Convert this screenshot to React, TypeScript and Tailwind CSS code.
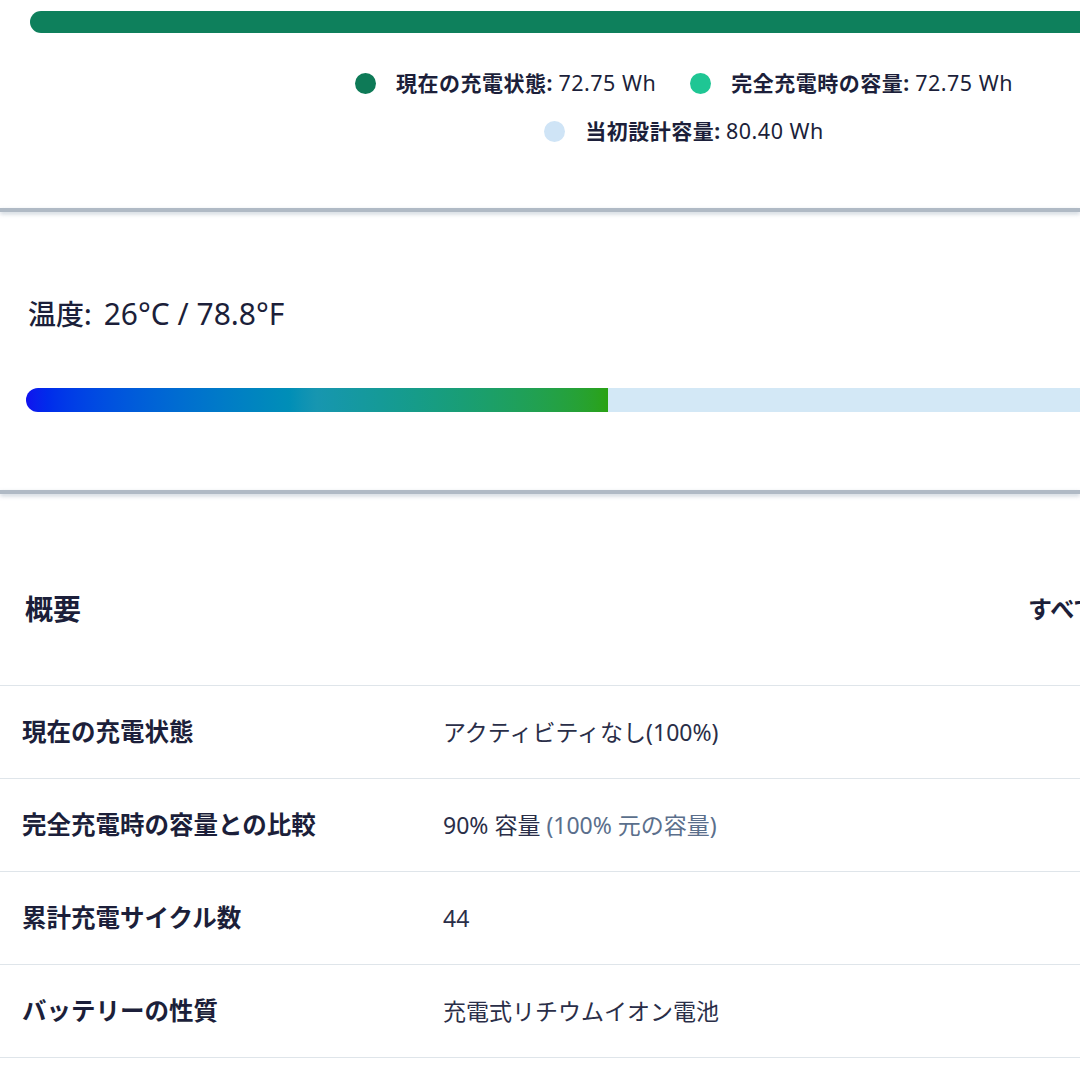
import React from "react";

const font = { fontFamily: '"Noto Sans", "Noto Sans CJK JP", sans-serif' };

function LegendItem({ color, label, value }: { color: string; label: string; value: string }) {
  return (
    <div className="flex items-center gap-[20px]">
      <span className={`block h-[21px] w-[21px] rounded-full ${color}`} />
      <span className="whitespace-nowrap text-[21px] leading-none text-[#1c1f3a]">
        <span className="font-bold tracking-[0.5px]">{label}:</span>{" "}
        <span className="text-[21.5px] tracking-[0.5px]">{value}</span>
      </span>
    </div>
  );
}

function Row({ label, children }: { label: string; children: React.ReactNode }) {
  return (
    <div className="flex h-[93px] items-center border-b border-[#dfe5ea]">
      <div className="w-[443px] pl-[22px] text-[24.5px] font-bold text-[#1c1f3a]">{label}</div>
      <div className="text-[23px] text-[#2a2e48]">{children}</div>
    </div>
  );
}

export default function App() {
  return (
    <div className="h-[1080px] w-[1080px] overflow-hidden bg-white" style={font}>
      {/* capacity card */}
      <div className="ml-[30px] w-[1308px] pt-[11px]">
        <div className="h-[22px] rounded-full bg-[#0e805c]" />
        <div className="mt-[39px] flex justify-center gap-[34px]">
          <LegendItem color="bg-[#0e7a57]" label="現在の充電状態" value="72.75 Wh" />
          <LegendItem color="bg-[#1fc694]" label="完全充電時の容量" value="72.75 Wh" />
        </div>
        <div className="mt-[26px] flex justify-center">
          <LegendItem color="bg-[#cfe4f6]" label="当初設計容量" value="80.40 Wh" />
        </div>
      </div>

      <div className="mt-[66px] h-[4px] bg-[#b0bac5] shadow-[0_2px_4px_rgba(120,140,160,0.4)]" />

      {/* temperature card */}
      <div className="pl-[28px] pt-[87px]">
        <div className="flex items-baseline leading-none text-[#1c1f3a]">
          <span className="text-[28px] font-medium">温度:</span>
          <span className="ml-[12px] text-[30px]">26°C / 78.8°F</span>
        </div>
        <div className="-ml-[2px] mt-[59px] flex h-[24px] w-[1080px]">
          <div className="h-full w-[582px] rounded-l-full bg-gradient-to-r from-[#1010ef] via-[#1796b0] to-[#2aa212]" />
          <div className="h-full flex-1 bg-[#d3e8f6]" />
        </div>
      </div>

      <div className="mt-[78px] h-[4px] bg-[#b0bac5] shadow-[0_2px_4px_rgba(120,140,160,0.4)]" />

      {/* summary */}
      <div className="flex items-center justify-between pl-[25px] pt-[101px]">
        <div className="text-[28px] font-bold leading-none text-[#1c1f3a]">概要</div>
        <div className="w-[52px] overflow-hidden whitespace-nowrap text-[24px] font-bold leading-none text-[#1c1f3a]">
          すべて表示
        </div>
      </div>
      <div className="mt-[62px] border-t border-[#dfe5ea]">
        <Row label="現在の充電状態">アクティビティなし(100%)</Row>
        <Row label="完全充電時の容量との比較">
          90% 容量 <span className="text-[#5b6f8c]">(100% 元の容量)</span>
        </Row>
        <Row label="累計充電サイクル数">44</Row>
        <Row label="バッテリーの性質">充電式リチウムイオン電池</Row>
      </div>
    </div>
  );
}
